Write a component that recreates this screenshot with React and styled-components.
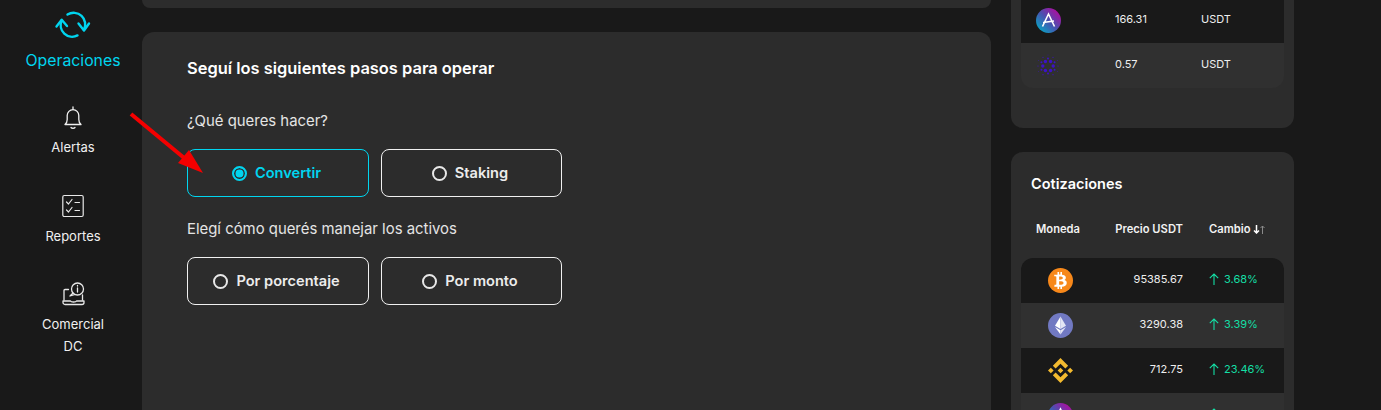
import React from "react";
import styled, { createGlobalStyle } from "styled-components";
import { FaBtc } from "react-icons/fa";
import { SiBinance } from "react-icons/si";

const GlobalStyle = createGlobalStyle`
  html, body { margin: 0; padding: 0; background: #191919; }
  body { font-family: Inter, "Liberation Sans", sans-serif; color: #fff; }
`;

const Page = styled.div`
  position: relative;
  display: flex;
  width: 1381px;
  height: 410px;
  overflow: hidden;
  background: #191919;
`;

const Sidebar = styled.nav`
  width: 142px;
  flex: none;
  box-sizing: border-box;
  display: flex;
  flex-direction: column;
  align-items: center;
  padding: 11px 0 0 4px;
  gap: 35px;
`;

const NavItem = styled.div`
  display: flex;
  flex-direction: column;
  align-items: center;
  gap: ${(p) => p.$gap || 7}px;
  margin-bottom: ${(p) => p.$after || 0}px;
  color: ${(p) => (p.$active ? "#00d5ef" : "#f0f0f0")};
  font-size: ${(p) => (p.$active ? "15.8px" : "13px")};
  line-height: 22px;
  text-align: center;
  svg { display: block; overflow: visible; }
`;

const Main = styled.main`
  width: 849px;
  flex: none;
  display: flex;
  flex-direction: column;
  gap: 24px;
`;

const TopStub = styled.div`
  height: 8px;
  flex: none;
  background: #2c2c2c;
  border-radius: 0 0 12px 12px;
`;

const Card = styled.section`
  flex: 1;
  background: #2c2c2c;
  border-radius: 12px 12px 0 0;
  padding: 26px 45px;
`;

const Title = styled.h2`
  margin: 0 0 33px;
  font-size: 16.45px;
  line-height: 20px;
  font-weight: 600;
`;

const Question = styled.p`
  margin: 0 0 ${(p) => p.$gap}px;
  font-size: 14.9px;
  line-height: 20px;
  color: #e4e4e4;
`;

const ButtonRow = styled.div`
  display: flex;
  gap: 12px;
  margin-bottom: ${(p) => p.$gap || 0}px;
`;

const Choice = styled.div`
  width: ${(p) => p.$width}px;
  height: 48px;
  box-sizing: border-box;
  display: flex;
  align-items: center;
  justify-content: center;
  gap: 8px;
  padding-right: 3px;
  border: 1px solid ${(p) => (p.$active ? "#00d5ef" : "#f0f0f0")};
  border-radius: 8px;
  color: ${(p) => (p.$active ? "#00d5ef" : "#ececec")};
  font-size: 14.6px;
  font-weight: 600;
`;

const Radio = styled.span`
  width: 15px;
  height: 15px;
  box-sizing: border-box;
  flex: none;
  border-radius: 50%;
  border: 2px solid ${(p) => (p.$active ? "#00d5ef" : "#e8e8e8")};
  background: ${(p) => (p.$active ? "#00d5ef" : "transparent")};
  box-shadow: ${(p) => (p.$active ? "inset 0 0 0 1.5px #2c2c2c" : "none")};
`;

const Side = styled.aside`
  width: 283px;
  margin-left: 20px;
  flex: none;
  display: flex;
  flex-direction: column;
  gap: 24px;
`;

const WalletCard = styled.section`
  height: 128px;
  flex: none;
  box-sizing: border-box;
  padding: 0 10px;
  background: #2c2c2c;
  border-radius: 0 0 12px 12px;
`;

const QuotesCard = styled.section`
  flex: 1;
  padding: 0 10px;
  background: #2c2c2c;
  border-radius: 12px 12px 0 0;
`;

const CardTitle = styled.h3`
  margin: 0;
  padding: 23px 10px 0;
  font-size: 14.5px;
  line-height: 18px;
  font-weight: 600;
`;

const Table = styled.div`
  border-radius: ${(p) => p.$radius};
  overflow: hidden;
`;

const Row = styled.div`
  height: ${(p) => (p.$first ? 43 : 45)}px;
  box-sizing: border-box;
  padding-bottom: ${(p) => (p.$first ? 2 : 0)}px;
  display: grid;
  grid-template-columns: ${(p) => p.$columns};
  align-items: center;
  background: ${(p) => (p.$alt ? "#303030" : "#191919")};
  font-size: 11px;
  color: #eee;
`;

const Coin = styled.div`
  display: flex;
  justify-content: center;
`;

const Round = styled.span`
  width: 25px;
  height: 25px;
  border-radius: 50%;
  display: flex;
  align-items: center;
  justify-content: center;
  background: ${(p) => p.$bg};
  color: #fff;
`;

const Value = styled.div`
  margin-bottom: 3px;
  text-align: ${(p) => p.$align || "left"};
`;

const Head = styled.div`
  height: 65px;
  display: grid;
  grid-template-columns: 74px 88px 26px auto;
  align-items: center;
  font-size: 11.2px;
  font-weight: 600;
  color: #f2f2f2;
  padding-top: 7px;
  box-sizing: border-box;
`;

const HeadCell = styled.div`
  grid-column: ${(p) => p.$col};
  display: flex;
  justify-content: ${(p) => p.$justify};
  align-items: center;
  gap: 3px;
`;

const Change = styled.div`
  grid-column: 3 / 5;
  margin-left: 26px;
  margin-bottom: 3px;
  display: flex;
  align-items: center;
  gap: 5px;
  color: #14dfa5;
  svg { display: block; }
`;

const columns = "78px 84px 26px auto";
const walletColumns = "54px 40px 1fr 83px";

const SpinIcon = () => (
  <svg width="35" height="27" viewBox="0 0 35 27" fill="none" stroke="#00d5ef" strokeWidth="2.4" strokeLinecap="round" strokeLinejoin="round">
    <path d="M6.700 9.500A11.500 11.500 0 0 0 22.500 24.400" />
    <path d="M28.800 18.800A11.500 11.500 0 0 0 12.500 3.600" />
    <path d="M1.500 15.500L6.700 8.800 12 15" />
    <path d="M23.500 12.500L29 19.500 34 12.500" />
  </svg>
);

const BellIcon = () => (
  <svg width="18" height="24" viewBox="0 0 18 24" fill="none" stroke="#f0f0f0" strokeWidth="1.3" strokeLinecap="round" strokeLinejoin="round">
    <path d="M1 18.500c1.400-1.200 2.200-3 2.200-5V9.500a5.800 5.800 0 0 1 11.600 0v4c0 2 .8 3.800 2.200 5z" />
    <path d="M9 1v2.500" />
    <path d="M7 21.500c.8 1 3.200 1 4 0" />
  </svg>
);

const ReportIcon = () => (
  <svg width="22" height="24" viewBox="0 0 22 24" fill="none" stroke="#e8e8e8" strokeWidth="1.2" strokeLinecap="round" strokeLinejoin="round">
    <rect x="0.800" y="1.500" width="20.400" height="21" rx="1.500" />
    <path d="M4.500 8l2 2 3.500-4.500" />
    <path d="M4.500 16l2 2 3.500-4.500" />
    <path d="M13 8.500h4.500M13 16.500h4.500" />
  </svg>
);

const ComercialIcon = () => (
  <svg width="23" height="24" viewBox="0 0 23 24" fill="none" stroke="#e8e8e8" strokeWidth="1.3" strokeLinecap="round" strokeLinejoin="round">
    <path d="M2 18V8.500a1 1 0 0 1 1-1h3.500" />
    <path d="M1 19h7.500c.5 1.300 5.500 1.300 6 0H22v1.500a2 2 0 0 1-2 2H3a2 2 0 0 1-2-2z" />
    <path d="M20.500 13v5" />
    <circle cx="15.500" cy="7" r="6" />
    <path d="M11 11l-3 3 5-1.500" />
    <path d="M15.500 6v4M15.500 3.500v.5" />
  </svg>
);

const AaveIcon = () => (
  <svg width="25" height="25" viewBox="0 0 25 25">
    <defs>
      <linearGradient id="aave" x1="0" y1="1" x2="1" y2="0">
        <stop offset="0.1" stopColor="#06a6c4" />
        <stop offset="0.5" stopColor="#4b50b0" />
        <stop offset="0.9" stopColor="#b3099f" />
      </linearGradient>
    </defs>
    <circle cx="12.500" cy="12.500" r="12.500" fill="url(#aave)" />
    <path d="M6.500 18.500L12.500 6l6 12.500M7 14.500l11-1.500" fill="none" stroke="#fff" strokeWidth="1.600" />
  </svg>
);

const cardanoDots = [
  ...[0, 60, 120, 180, 240, 300].map((a) => ({ a, d: 5.2, r: 1.7 })),
  ...[30, 90, 150, 210, 270, 330].map((a) => ({ a, d: 7.6, r: 1 })),
  ...[0, 60, 120, 180, 240, 300].map((a) => ({ a, d: 10, r: 0.6 })),
  ...[30, 90, 150, 210, 270, 330].map((a) => ({ a, d: 11, r: 0.4 })),
];

const CardanoIcon = () => (
  <svg width="24" height="24" viewBox="-12 -12 24 24" fill="#3d12c8">
    {cardanoDots.map(({ a, d, r }) => (
      <circle key={`${a}-${d}`} cx={d * Math.cos((a * Math.PI) / 180)} cy={d * Math.sin((a * Math.PI) / 180)} r={r} />
    ))}
  </svg>
);

const EthIcon = () => (
  <svg width="25" height="25" viewBox="0 0 25 25">
    <circle cx="12.500" cy="12.500" r="12.500" fill="#7179c2" />
    <path d="M12.500 3.500L7 12.800l5.500 3.200z" fill="#fff" />
    <path d="M12.500 3.500l5.500 9.300-5.500 3.200z" fill="#e3e5f4" />
    <path d="M7 14l5.500 7.500V17.200z" fill="#fff" />
    <path d="M18 14l-5.500 7.500V17.200z" fill="#e3e5f4" />
  </svg>
);

const UpArrow = () => (
  <svg width="10" height="12" viewBox="0 0 10 12" fill="none" stroke="#14dfa5" strokeWidth="1.100">
    <path d="M5 12V1M.8 5.200L5 1l4.200 4.200" />
  </svg>
);

const SortArrows = () => (
  <svg width="13" height="9" viewBox="0 0 13 9" fill="none">
    <path d="M3.500 0v8M1 5.500L3.500 8 6 5.500" stroke="#fff" strokeWidth="1.500" />
    <path d="M9.500 9V1M7.500 3L9.500 1l2 2" stroke="#8a8a8a" strokeWidth="1" />
  </svg>
);

const RedArrow = styled.svg`
  position: absolute;
  left: 125px;
  top: 108px;
`;

// the fourth row is cut by the window, only its icon and arrow show
const quotes = [
  { price: "95385.67", change: "3.68%", icon: <Round $bg="#f7881a"><FaBtc size={17} /></Round> },
  { price: "3290.38", change: "3.39%", icon: <EthIcon /> },
  { price: "712.75", change: "23.46%", icon: <SiBinance size={25} color="#f3ba2f" /> },
  { price: "", change: "", icon: <AaveIcon /> },
];

export default function App() {
  return (
    <Page>
      <GlobalStyle />
      <Sidebar>
        <NavItem $active $gap={12} $after={-1}>
          <SpinIcon />
          <span>Operaciones</span>
        </NavItem>
        <NavItem $gap={6} $after={1}>
          <BellIcon />
          <span>Alertas</span>
        </NavItem>
        <NavItem>
          <ReportIcon />
          <span>Reportes</span>
        </NavItem>
        <NavItem>
          <ComercialIcon />
          <span>Comercial<br />DC</span>
        </NavItem>
      </Sidebar>

      <Main>
        <TopStub />
        <Card>
          <Title>Seguí los siguientes pasos para operar</Title>
          <Question $gap={18}>¿Qué queres hacer?</Question>
          <ButtonRow $gap={22}>
            <Choice $active $width={182}><Radio $active />Convertir</Choice>
            <Choice $width={181}><Radio />Staking</Choice>
          </ButtonRow>
          <Question $gap={18}>Elegí cómo querés manejar los activos</Question>
          <ButtonRow>
            <Choice $width={182}><Radio />Por porcentaje</Choice>
            <Choice $width={181}><Radio />Por monto</Choice>
          </ButtonRow>
        </Card>
      </Main>

      <Side>
        <WalletCard>
          <Table $radius="0 0 12px 12px">
            <Row $first $columns={walletColumns}>
              <Coin><AaveIcon /></Coin>
              <span />
              <Value>166.31</Value>
              <Value>USDT</Value>
            </Row>
            <Row $alt $columns={walletColumns}>
              <Coin><CardanoIcon /></Coin>
              <span />
              <Value>0.57</Value>
              <Value>USDT</Value>
            </Row>
          </Table>
        </WalletCard>
        <QuotesCard>
          <CardTitle>Cotizaciones</CardTitle>
          <Head>
            <HeadCell $col={1} $justify="center">Moneda</HeadCell>
            <HeadCell $col={2} $justify="flex-end">Precio USDT</HeadCell>
            <HeadCell $col={4} $justify="flex-start">Cambio <SortArrows /></HeadCell>
          </Head>
          <Table $radius="12px 12px 0 0">
            {quotes.map((q, i) => (
              <Row key={i} $alt={i % 2 === 1} $columns={columns}>
                <Coin>{q.icon}</Coin>
                <Value $align="right">{q.price}</Value>
                <Change><UpArrow />{q.change}</Change>
              </Row>
            ))}
          </Table>
        </QuotesCard>
      </Side>

      <RedArrow width="85" height="72" viewBox="0 0 85 72">
        <path d="M6 6L64 54" stroke="#f40000" strokeWidth="4" />
        <path d="M78 65L53 55L64 42z" fill="#f40000" />
      </RedArrow>
    </Page>
  );
}
